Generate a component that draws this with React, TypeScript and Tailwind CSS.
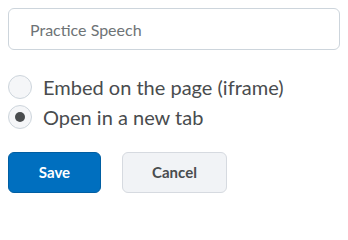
import { useState } from "react";

const FONT = { fontFamily: "Lato, 'Open Sans', sans-serif" };

export default function App() {
  const [mode, setMode] = useState<"embed" | "tab">("tab");

  return (
    <div className="bg-white w-[348px] h-[203px] p-2" style={FONT}>
      <input
        type="text"
        defaultValue="Practice Speech"
        className="w-[332px] h-[42px] rounded-md border border-[#cdd5dc] bg-white pl-[21px] text-[16px] text-[#6e7376] outline-none"
      />

      {/* Radio group */}
      <div className="mt-[25px] flex flex-col gap-[6px]">
        <Radio checked={mode === "embed"} onClick={() => setMode("embed")}>
          Embed on the page (iframe)
        </Radio>
        <Radio checked={mode === "tab"} onClick={() => setMode("tab")}>
          Open in a new tab
        </Radio>
      </div>

      {/* Actions */}
      <div className="mt-[23px] flex items-center gap-[21px]">
        <button
          type="button"
          className="h-[41px] w-[93px] rounded-md border border-[#005ea2] bg-[#006fbf] text-[15px] font-bold text-white"
        >
          Save
        </button>
        <button
          type="button"
          className="h-[41px] w-[105px] rounded-md border border-[#d6dae0] bg-[#f1f3f6] text-[15px] font-bold text-[#494c4e]"
        >
          Cancel
        </button>
      </div>
    </div>
  );
}

function Radio({
  children, checked, onClick,
}: {
  children: React.ReactNode;
  checked: boolean;
  onClick: () => void;
}) {
  return (
    <label className="flex items-center gap-[11px] cursor-pointer" onClick={onClick}>
      <span className="flex h-6 w-6 shrink-0 items-center justify-center rounded-full border border-[#cdd5dc] bg-[#f5f6f8]">
        {checked && <span className="h-[10px] w-[10px] rounded-full bg-[#494c4e]" />}
      </span>
      <span className="text-[20px] leading-6 text-[#494c4e]">{children}</span>
    </label>
  );
}
